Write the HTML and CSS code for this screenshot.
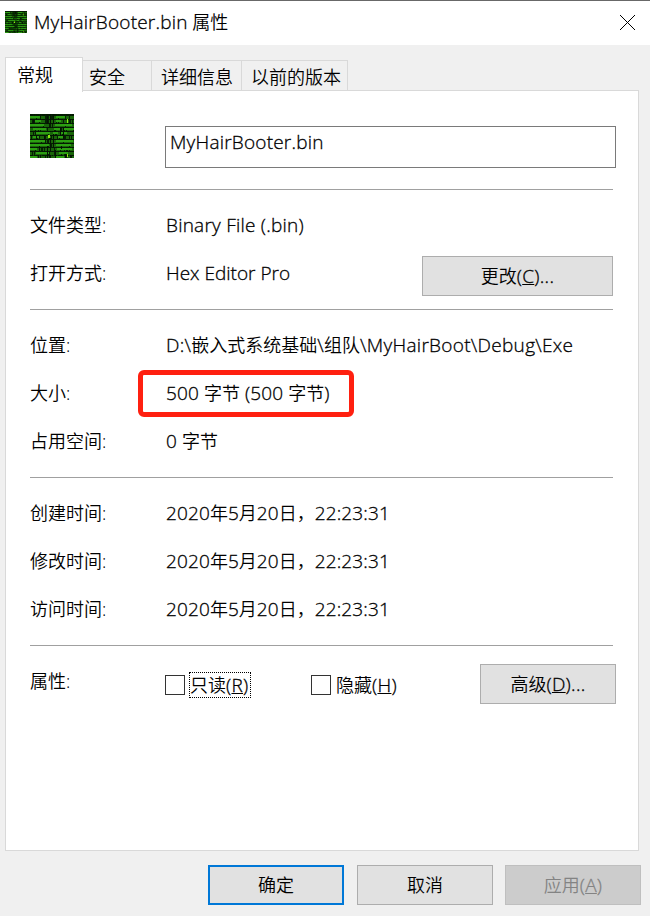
FILE: index.html
```html
<!DOCTYPE html>
<html lang="zh-CN">
<head>
<meta charset="utf-8">
<title>MyHairBooter.bin 属性</title>
<link rel="stylesheet" href="styles.css">
</head>
<body>
<svg width="0" height="0" class="defs">
  <symbol id="matrix" viewBox="0 0 44 44">
    <rect width="44" height="44" fill="#051f03"/>
    <g stroke="#196509" stroke-width="3">
      <path d="M0 3.500H44" stroke-dasharray="6 1 3 1 4 2 1 1 1 3 5 1"/>
      <path d="M0 7.500H44" stroke-dasharray="2 1 1 1 4 1 5 2 1 1 4 1"/>
      <path d="M0 11.500H44" stroke-dasharray="13 1 5 2 1 1 12 1"/>
      <path d="M0 15.500H44" stroke-dasharray="5 1 2 1 1 1 6 1 6 2"/>
      <path d="M0 19.500H44" stroke-dasharray="3 1 1 1 12 1 4 1 1 2"/>
      <path d="M0 23.500H44" stroke-dasharray="1 1 5 1 1 1 4 2 3 1"/>
      <path d="M0 27.500H44" stroke-dasharray="11 1 3 1 1 2 14 1"/>
      <path d="M0 31.500H44" stroke-dasharray="18 1 2 1 1 1 15 1"/>
      <path d="M0 35.500H44" stroke-dasharray="5 1 3 1 1 2 1 1 9 1"/>
      <path d="M0 39.500H44" stroke-dasharray="2 1 1 1 13 2 4 1 6 1"/>
      <path d="M0 43H44" stroke-dasharray="5 1 2 1 1 1 4 1 3 2"/>
    </g>
    <g stroke="#2c9f12" stroke-width="2">
      <path d="M0 3H44" stroke-dasharray="10 16 9 9"/>
      <path d="M0 7H44" stroke-dasharray="0 5 6 15 5 13"/>
      <path d="M0 11H44" stroke-dasharray="14 11 17 2"/>
      <path d="M0 15H44" stroke-dasharray="0 3 13 8 6 4 10 0"/>
      <path d="M0 19H44" stroke-dasharray="0 6 14 3 5 3 6 7"/>
      <path d="M0 23H44" stroke-dasharray="0 3 6 19 5 11"/>
      <path d="M0 27H44" stroke-dasharray="15 11 17 1"/>
      <path d="M0 31H44" stroke-dasharray="19 7 15 3"/>
      <path d="M0 35H44" stroke-dasharray="7 20 15 2"/>
      <path d="M0 39H44" stroke-dasharray="0 6 13 10 9 6"/>
      <path d="M0 43H44" stroke-dasharray="7 19 8 10"/>
    </g>
    <g stroke="#041303" stroke-width="1">
      <path d="M0 1H44M0 5.500H44M0 9.500H44M0 13.500H44M0 17.500H44M0 21.500H44M0 25.500H44M0 29.500H44M0 33.500H44M0 37.500H44M0 41.500H44" opacity=".8" stroke-dasharray="3 1 1 1"/>
      <path d="M17.500 0V10M20.500 0V10M23.500 0V10M3.500 5V10M30.500 13V21M33.500 13V25M14.500 21V25M23.500 20V34M20.500 24V37M17.500 32V44M31.500 32V35M6.500 21V25M9.500 32V37M35.500 40V44M25.500 36V44"/>
    </g>
    <path d="M18 21h2v3h-2zM37 5h1v4h-1zM37 40h1v3h-1z" fill="#8bea10"/>
  </symbol>
</svg>
<div class="window">
  <header class="titlebar">
    <svg class="title-icon"><use href="#matrix"/></svg>
    <h1 class="title"><span class="lat name">MyHairBooter.bin</span> 属性</h1>
    <svg class="close" viewBox="0 0 15 15"><path d="M0 0L15 15M15 0L0 15"/></svg>
  </header>
  <nav class="tabs">
    <span class="tab active">常规</span>
    <span class="tab t2">安全</span>
    <span class="tab t3">详细信息</span>
    <span class="tab t4">以前的版本</span>
  </nav>
  <main class="panel">
    <div class="filehead">
      <svg class="file-icon"><use href="#matrix"/></svg>
      <div class="field"><span class="lat name">MyHairBooter.bin</span></div>
    </div>
    <section class="group">
      <div class="row"><span class="label">文件类型:</span><span class="lat type">Binary File (.bin)</span></div>
      <div class="row"><span class="label">打开方式:</span><span class="lat prog">Hex Editor Pro</span><span class="btn change"><span>更改<span class="lat">(<u>C</u>)...</span></span></span></div>
    </section>
    <section class="group">
      <div class="row"><span class="label">位置:</span><span><span class="lat path">D:\</span>嵌入式系统基础<span class="lat path">\</span>组队<span class="lat path">\MyHairBoot\Debug\Exe</span></span></div>
      <div class="row"><span class="label">大小:</span><span class="size"><span class="lat">500 </span>字节<span class="lat"> (500 </span>字节<span class="lat">)</span></span></div>
      <div class="row"><span class="label">占用空间:</span><span><span class="lat">0 </span>字节</span></div>
    </section>
    <section class="group">
      <div class="row"><span class="label">创建时间:</span><span><span class="lat">2020</span>年<span class="lat">5</span>月<span class="lat">20</span>日，<span class="lat">22:23:31</span></span></div>
      <div class="row"><span class="label">修改时间:</span><span><span class="lat">2020</span>年<span class="lat">5</span>月<span class="lat">20</span>日，<span class="lat">22:23:31</span></span></div>
      <div class="row"><span class="label">访问时间:</span><span><span class="lat">2020</span>年<span class="lat">5</span>月<span class="lat">20</span>日，<span class="lat">22:23:31</span></span></div>
    </section>
    <section class="group attrs">
      <span class="label">属性:</span>
      <span class="check readonly"><i class="box"></i><span class="caption focus">只读<span class="lat">(<u>R</u>)</span></span></span>
      <span class="check"><i class="box"></i><span class="caption">隐藏<span class="lat">(<u>H</u>)</span></span></span>
      <span class="btn advanced"><span>高级<span class="lat">(<u>D</u>)...</span></span></span>
    </section>
  </main>
  <footer class="actions">
    <span class="btn ok">确定</span>
    <span class="btn">取消</span>
    <span class="btn disabled"><span>应用<span class="lat">(<u>A</u>)</span></span></span>
  </footer>
</div>
</body>
</html>
```
FILE: styles.css
```css
*, ::before { box-sizing: border-box; }
body {
  margin: 0;
  font: 18px/24px "Open Sans", "Noto Sans CJK SC", sans-serif;
  font-weight: 350;
  color: #000;
  background: #f0f0f0;
  white-space: nowrap;
}
.defs { position: absolute; }
.window {
  width: 650px;
  height: 916px;
  display: flex;
  flex-direction: column;
  background: #f0f0f0;
  overflow: hidden;
}
.titlebar {
  height: 45px;
  display: flex;
  align-items: center;
  padding: 0 15px 0 5px;
  background: #fff;
  border-top: 1px solid #686868;
}
.title-icon { width: 22px; height: 22px; margin-top: -3px; }
.title { margin: -2px auto 0 7px; font-size: 18px; font-weight: 350; }
.close { width: 15px; height: 15px; margin-top: -2px; }
.close path { stroke: #000; stroke-width: 1; fill: none; }
.lat { font-size: 19px; letter-spacing: 0.12px; -webkit-text-stroke: 0.3px currentColor; }
.name { letter-spacing: 0.21px; }
.type { letter-spacing: 0.23px; }
.prog { letter-spacing: 0; }
.path { letter-spacing: 0.29px; }
.tabs {
  height: 46px;
  display: flex;
  align-items: flex-end;
  padding-left: 5px;
}
.tab {
  height: 31px;
  padding-top: 4px;
  border: 1px solid #d9d9d9;
  border-width: 1px 1px 0 0;
}
.tab.active {
  position: relative;
  width: 78px;
  height: 35px;
  margin-bottom: -1px;
  padding: 5px 0 0 11px;
  border-left-width: 1px;
  background: #fff;
}
.t2 { width: 69px; padding-left: 6px; }
.t3 { width: 90px; padding-left: 9px; }
.t4 { width: 106px; padding-left: 9px; }
.panel {
  width: 634px;
  height: 761px;
  margin: -1px 0 0 5px;
  padding: 0 22px 0 24px;
  border: 1px solid #d9d9d9;
  background: #fff;
}
.filehead {
  height: 98px;
  display: flex;
  align-items: flex-start;
}
.file-icon { width: 44px; height: 44px; margin-top: 23px; }
.field {
  width: 451px;
  height: 42px;
  margin: 35px 0 0 91px;
  padding: 3px 4px;
  border: 1px solid #7a7a7a;
}
.group {
  width: 583px;
  padding: 11px 0 12px;
  border-top: 1px solid #a0a0a0;
}
.row { height: 48px; display: flex; align-items: center; }
.label { width: 136px; flex: none; }
.size { position: relative; }
.size::before {
  content: "";
  position: absolute;
  left: -28px;
  top: -11px;
  width: 216px;
  height: 47px;
  border: 5px solid #ff2010;
  border-radius: 6px;
}
.btn {
  width: 136px;
  height: 40px;
  display: flex;
  align-items: center;
  justify-content: center;
  background: #e1e1e1;
  border: 1px solid #adadad;
}
.btn.change { width: 191px; margin: 6px 0 0 auto; }
.attrs { display: flex; width: 586px; padding-top: 18px; border: 0; background: linear-gradient(#a0a0a0, #a0a0a0) 0 0 / 583px 1px no-repeat; }
.attrs .label { padding-top: 6px; width: 135px; }
.check { display: flex; align-items: center; height: 44px; }
.readonly { width: 146px; }
.box { width: 20px; height: 20px; border: 1px solid #333; margin-right: 4px; }
.caption { height: 26px; border: 1px solid transparent; }
.caption .lat, .btn .lat { letter-spacing: 0.3px; }
.focus { border: 1px dotted #000; width: 62px; }
.btn.advanced { margin-left: auto; margin-top: 1px; }
.actions {
  display: flex;
  justify-content: flex-end;
  gap: 12px;
  padding: 14px 9px 0 0;
}
.ok { border: 2px solid #0078d7; margin-right: 1px; }
.disabled { color: #838383; background: #ccc; border-color: #bfbfbf; }
```
